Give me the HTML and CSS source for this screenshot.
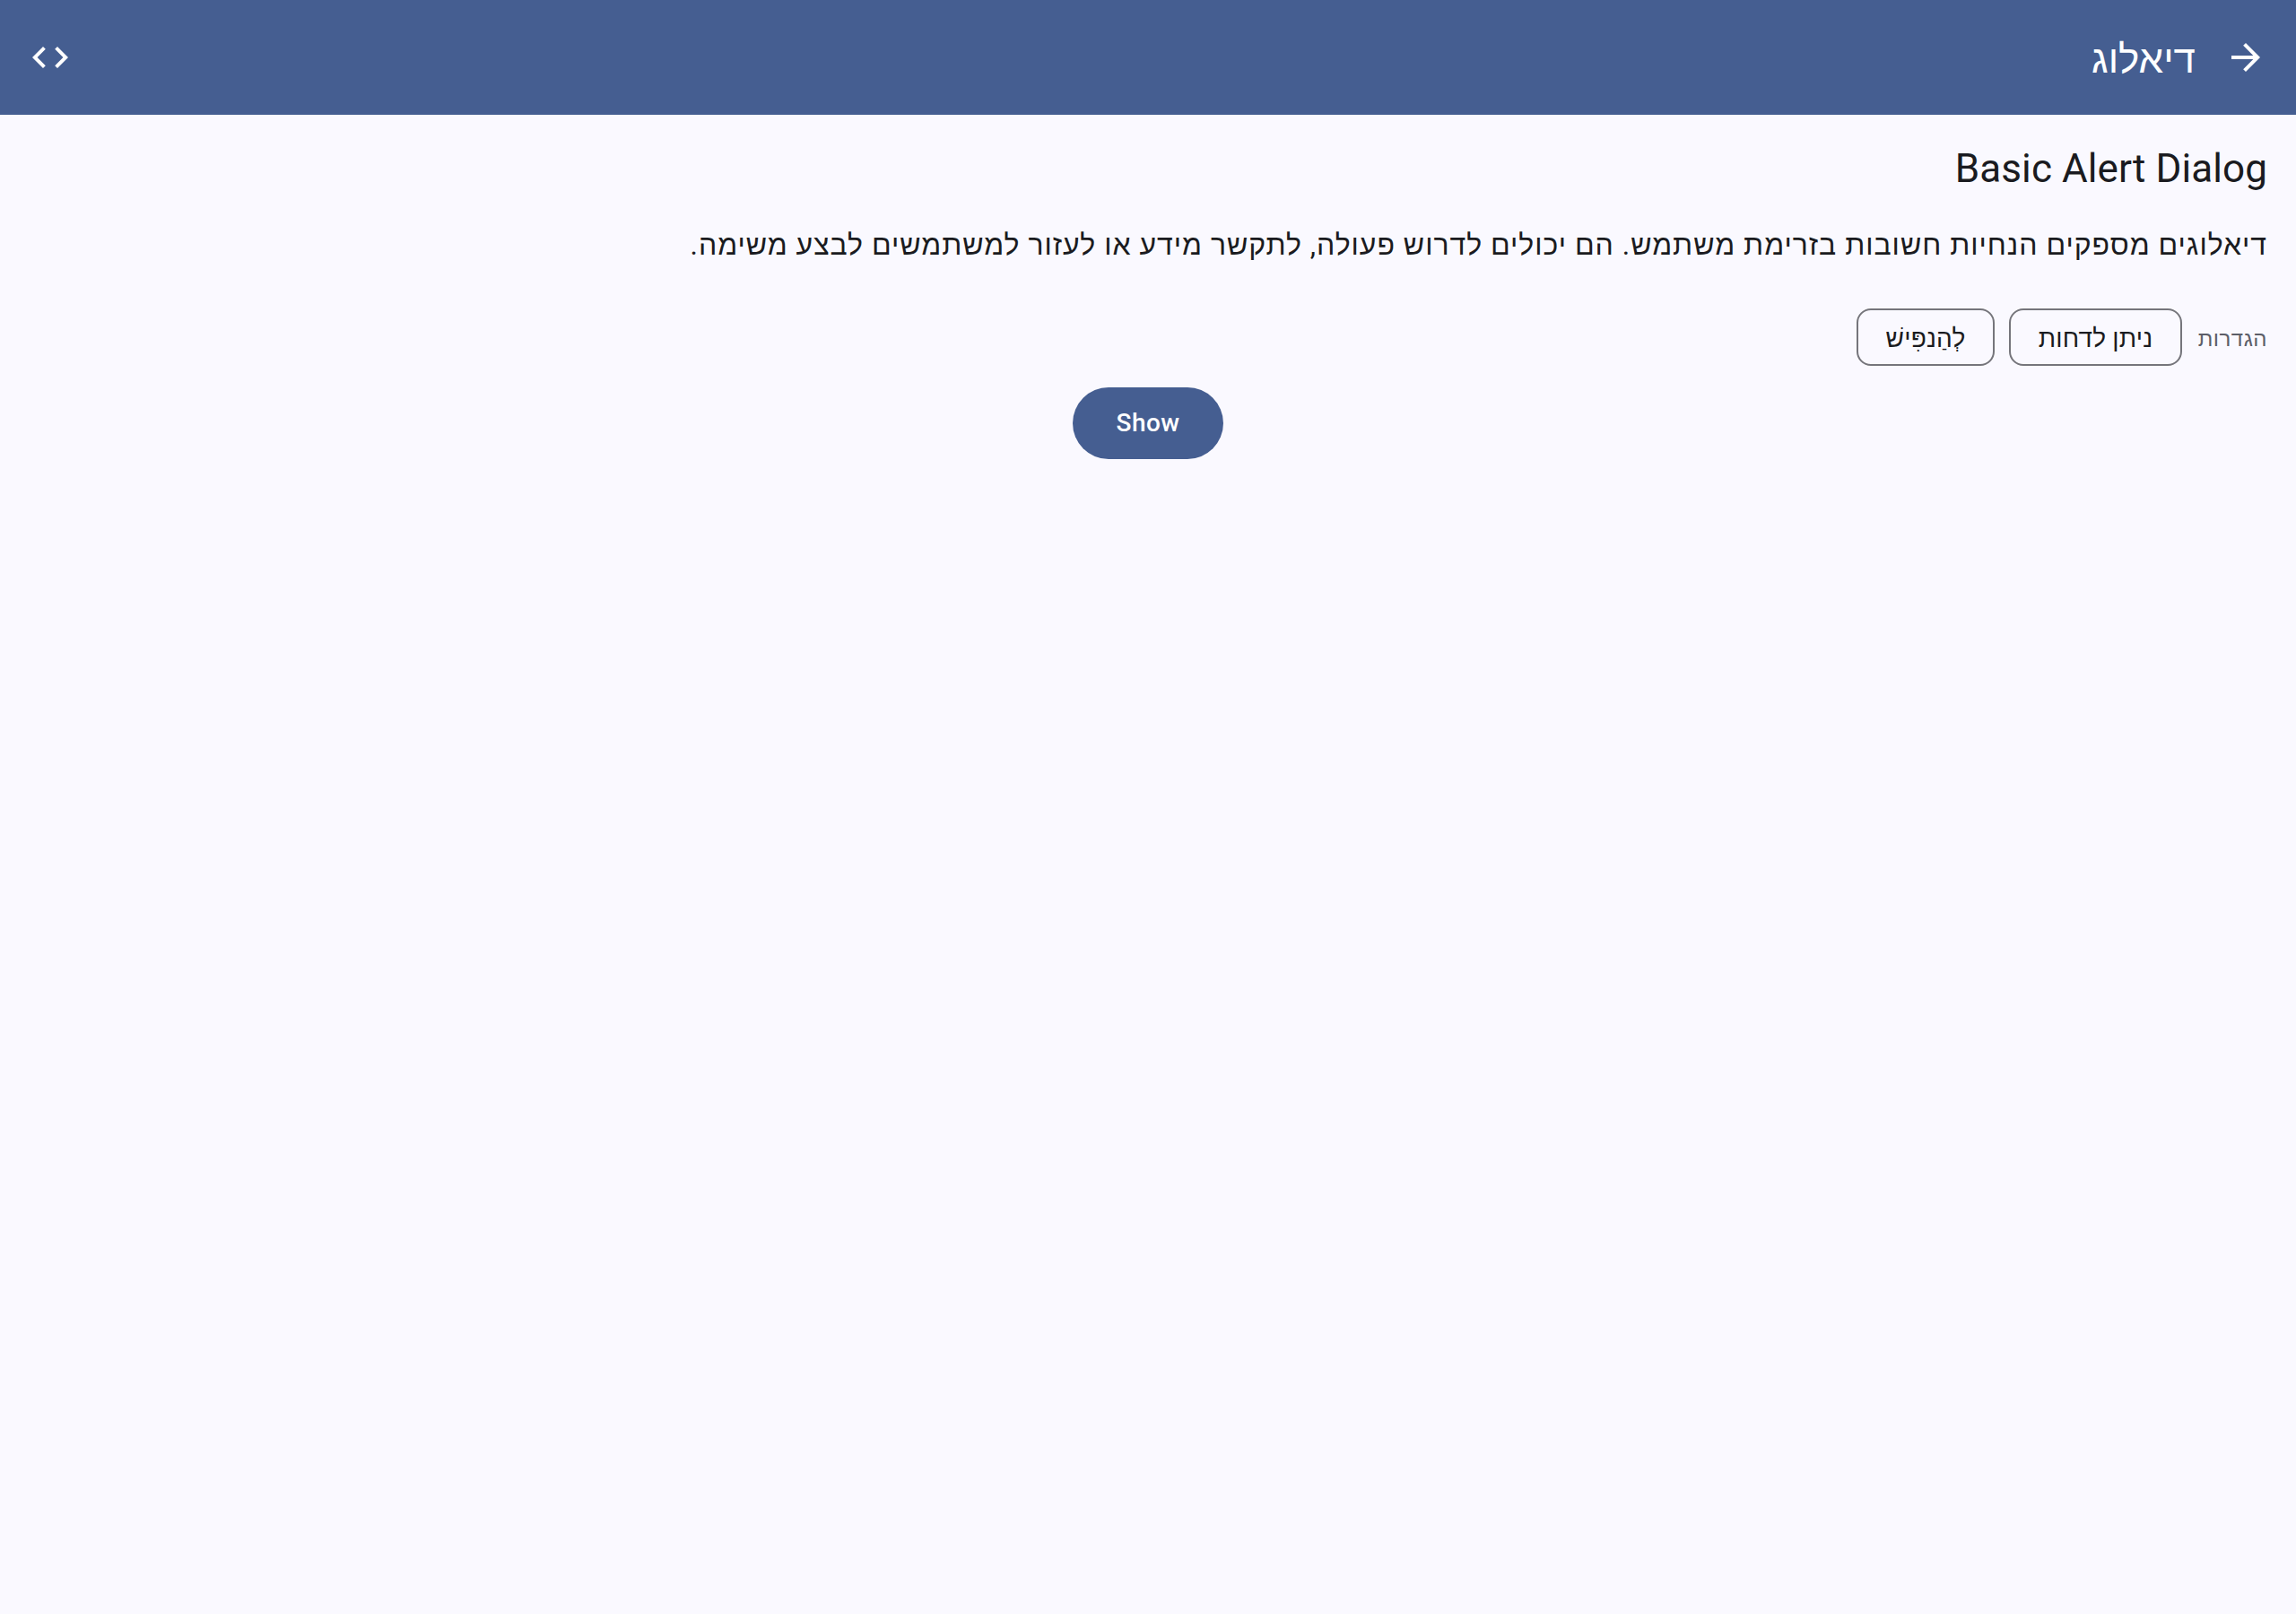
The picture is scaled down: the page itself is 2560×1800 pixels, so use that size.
FILE: index.html
```html
<!DOCTYPE html>
<html lang="he" dir="rtl">
<head>
<meta charset="utf-8">
<title>דיאלוג</title>
<link rel="stylesheet" href="styles.css">
</head>
<body>
<header class="app-bar">
  <svg class="icon" viewBox="0 0 24 24"><path d="M12 4l-1.41 1.41L16.17 11H4v2h12.17l-5.58 5.59L12 20l8-8z"/></svg>
  <h1 class="app-title">דיאלוג</h1>
  <svg class="icon" viewBox="0 0 24 24"><path d="M9.4 16.6L4.8 12l4.6-4.6L8 6l-6 6 6 6 1.4-1.4zm5.2 0l4.6-4.6-4.6-4.6L16 6l6 6-6 6-1.4-1.4z"/></svg>
</header>
<main class="content">
  <h2 class="heading" dir="ltr">Basic Alert Dialog</h2>
  <p class="description"><span class="line">דיאלוגים מספקים הנחיות חשובות בזרימת משתמש. הם יכולים לדרוש פעולה, לתקשר מידע או לעזור למשתמשים לבצע משימה.</span></p>
  <div class="options">
    <span class="label">הגדרות</span>
    <button class="chip chip-dismiss">ניתן לדחות</button>
    <button class="chip chip-animate">לְהַנפִּישׁ</button>
  </div>
  <button class="show">Show</button>
</main>
</body>
</html>
```
FILE: styles.css
```css
* { box-sizing: border-box; }
body { margin: 0; min-height: 1800px; background: #faf9ff; color: #1a1b20; font-family: Roboto, "Liberation Sans", sans-serif; }
.app-bar { height: 128px; padding: 0 32px; display: flex; align-items: center; background: #455e91; color: #fff; }
.icon { width: 48px; height: 48px; fill: currentColor; }
.app-title { margin: 0; margin-inline: 32px auto; padding-top: 3px; font-size: 44px; font-weight: 400; }
.content { padding: 32px; display: flex; flex-direction: column; }
.heading { margin: 0; font-size: 44px; line-height: 56px; font-weight: 400; text-align: right; letter-spacing: 0.08px; }
.description { margin: 33px 0 0; font-size: 32px; line-height: 48px; letter-spacing: 0.97px; }
.line { white-space: nowrap; }
.options { margin-top: 47px; height: 64px; display: flex; align-items: center; gap: 16px; }
.label { width: 79px; padding-top: 3px; font-size: 24px; letter-spacing: 0.5px; color: #5c5e68; white-space: nowrap; }
.chip { height: 64px; padding: 2px 0 0; border: 2px solid #75757b; border-radius: 16px; background: none; color: inherit; font: 400 28px Roboto, "Liberation Sans", sans-serif; letter-spacing: 0.2px; white-space: nowrap; }
.chip-dismiss { width: 193px; }
.chip-animate { width: 154px; }
.show { align-self: center; margin-top: 24px; width: 168px; height: 80px; padding: 0 0 2px; border: 0; border-radius: 40px; background: #455e91; color: #fff; font: 500 28px Roboto, sans-serif; letter-spacing: 0.4px; }
```
